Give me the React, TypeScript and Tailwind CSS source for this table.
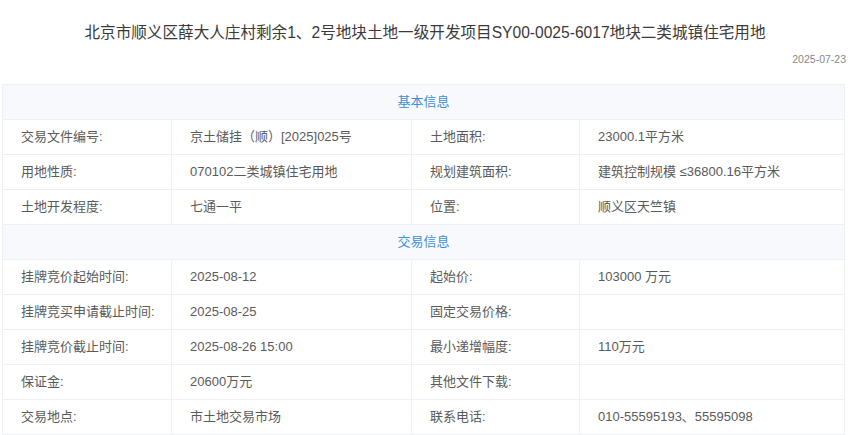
import React from "react";

const basic: [string, string, string, string][] = [
  ["交易文件编号:", "京土储挂（顺）[2025]025号", "土地面积:", "23000.1平方米"],
  ["用地性质:", "070102二类城镇住宅用地", "规划建筑面积:", "建筑控制规模 ≤36800.16平方米"],
  ["土地开发程度:", "七通一平", "位置:", "顺义区天竺镇"],
];

const trade: [string, string, string, string][] = [
  ["挂牌竞价起始时间:", "2025-08-12", "起始价:", "103000 万元"],
  ["挂牌竞买申请截止时间:", "2025-08-25", "固定交易价格:", ""],
  ["挂牌竞价截止时间:", "2025-08-26 15:00", "最小递增幅度:", "110万元"],
  ["保证金:", "20600万元", "其他文件下载:", ""],
  ["交易地点:", "市土地交易市场", "联系电话:", "010-55595193、55595098"],
];

function Section({ title }: { title: string }) {
  return (
    <div className="h-[35px] flex items-center justify-center bg-[#f7f9fc] border-b border-[#edf0f5] text-[13px] text-[#3d8fd9]">
      {title}
    </div>
  );
}

function Row({ r }: { r: [string, string, string, string] }) {
  const cell = "flex items-center pl-[18px] border-[#edf0f5]";
  return (
    <div className="grid grid-cols-[169px_240px_168px_1fr] h-[35px] border-b border-[#edf0f5] text-[13px] text-[#5a5a5a]">
      <div className={cell + " border-r"}>{r[0]}</div>
      <div className={cell + " border-r"}>{r[1]}</div>
      <div className={cell + " border-r"}>{r[2]}</div>
      <div className={cell}>{r[3]}</div>
    </div>
  );
}

export default function App() {
  return (
    <div
      className="w-[850px] h-[435px] bg-white overflow-hidden"
      style={{ fontFamily: '"Liberation Sans", "Noto Sans CJK SC", sans-serif' }}
    >
      <div className="pt-[22px] text-center text-[15.6px] leading-[22px] text-[#3a3a3a]">
        北京市顺义区薛大人庄村剩余1、2号地块土地一级开发项目SY00-0025-6017地块二类城镇住宅用地
      </div>
      <div className="mt-[7px] pr-[4px] text-right text-[10.5px] leading-[16px] text-[#888]">2025-07-23</div>
      <div className="mt-[17px] ml-[2px] w-[843px] border-t border-l border-r border-[#edf0f5]">
        <Section title="基本信息" />
        {basic.map((r, i) => (
          <Row key={i} r={r} />
        ))}
        <Section title="交易信息" />
        {trade.map((r, i) => (
          <Row key={i} r={r} />
        ))}
      </div>
    </div>
  );
}
